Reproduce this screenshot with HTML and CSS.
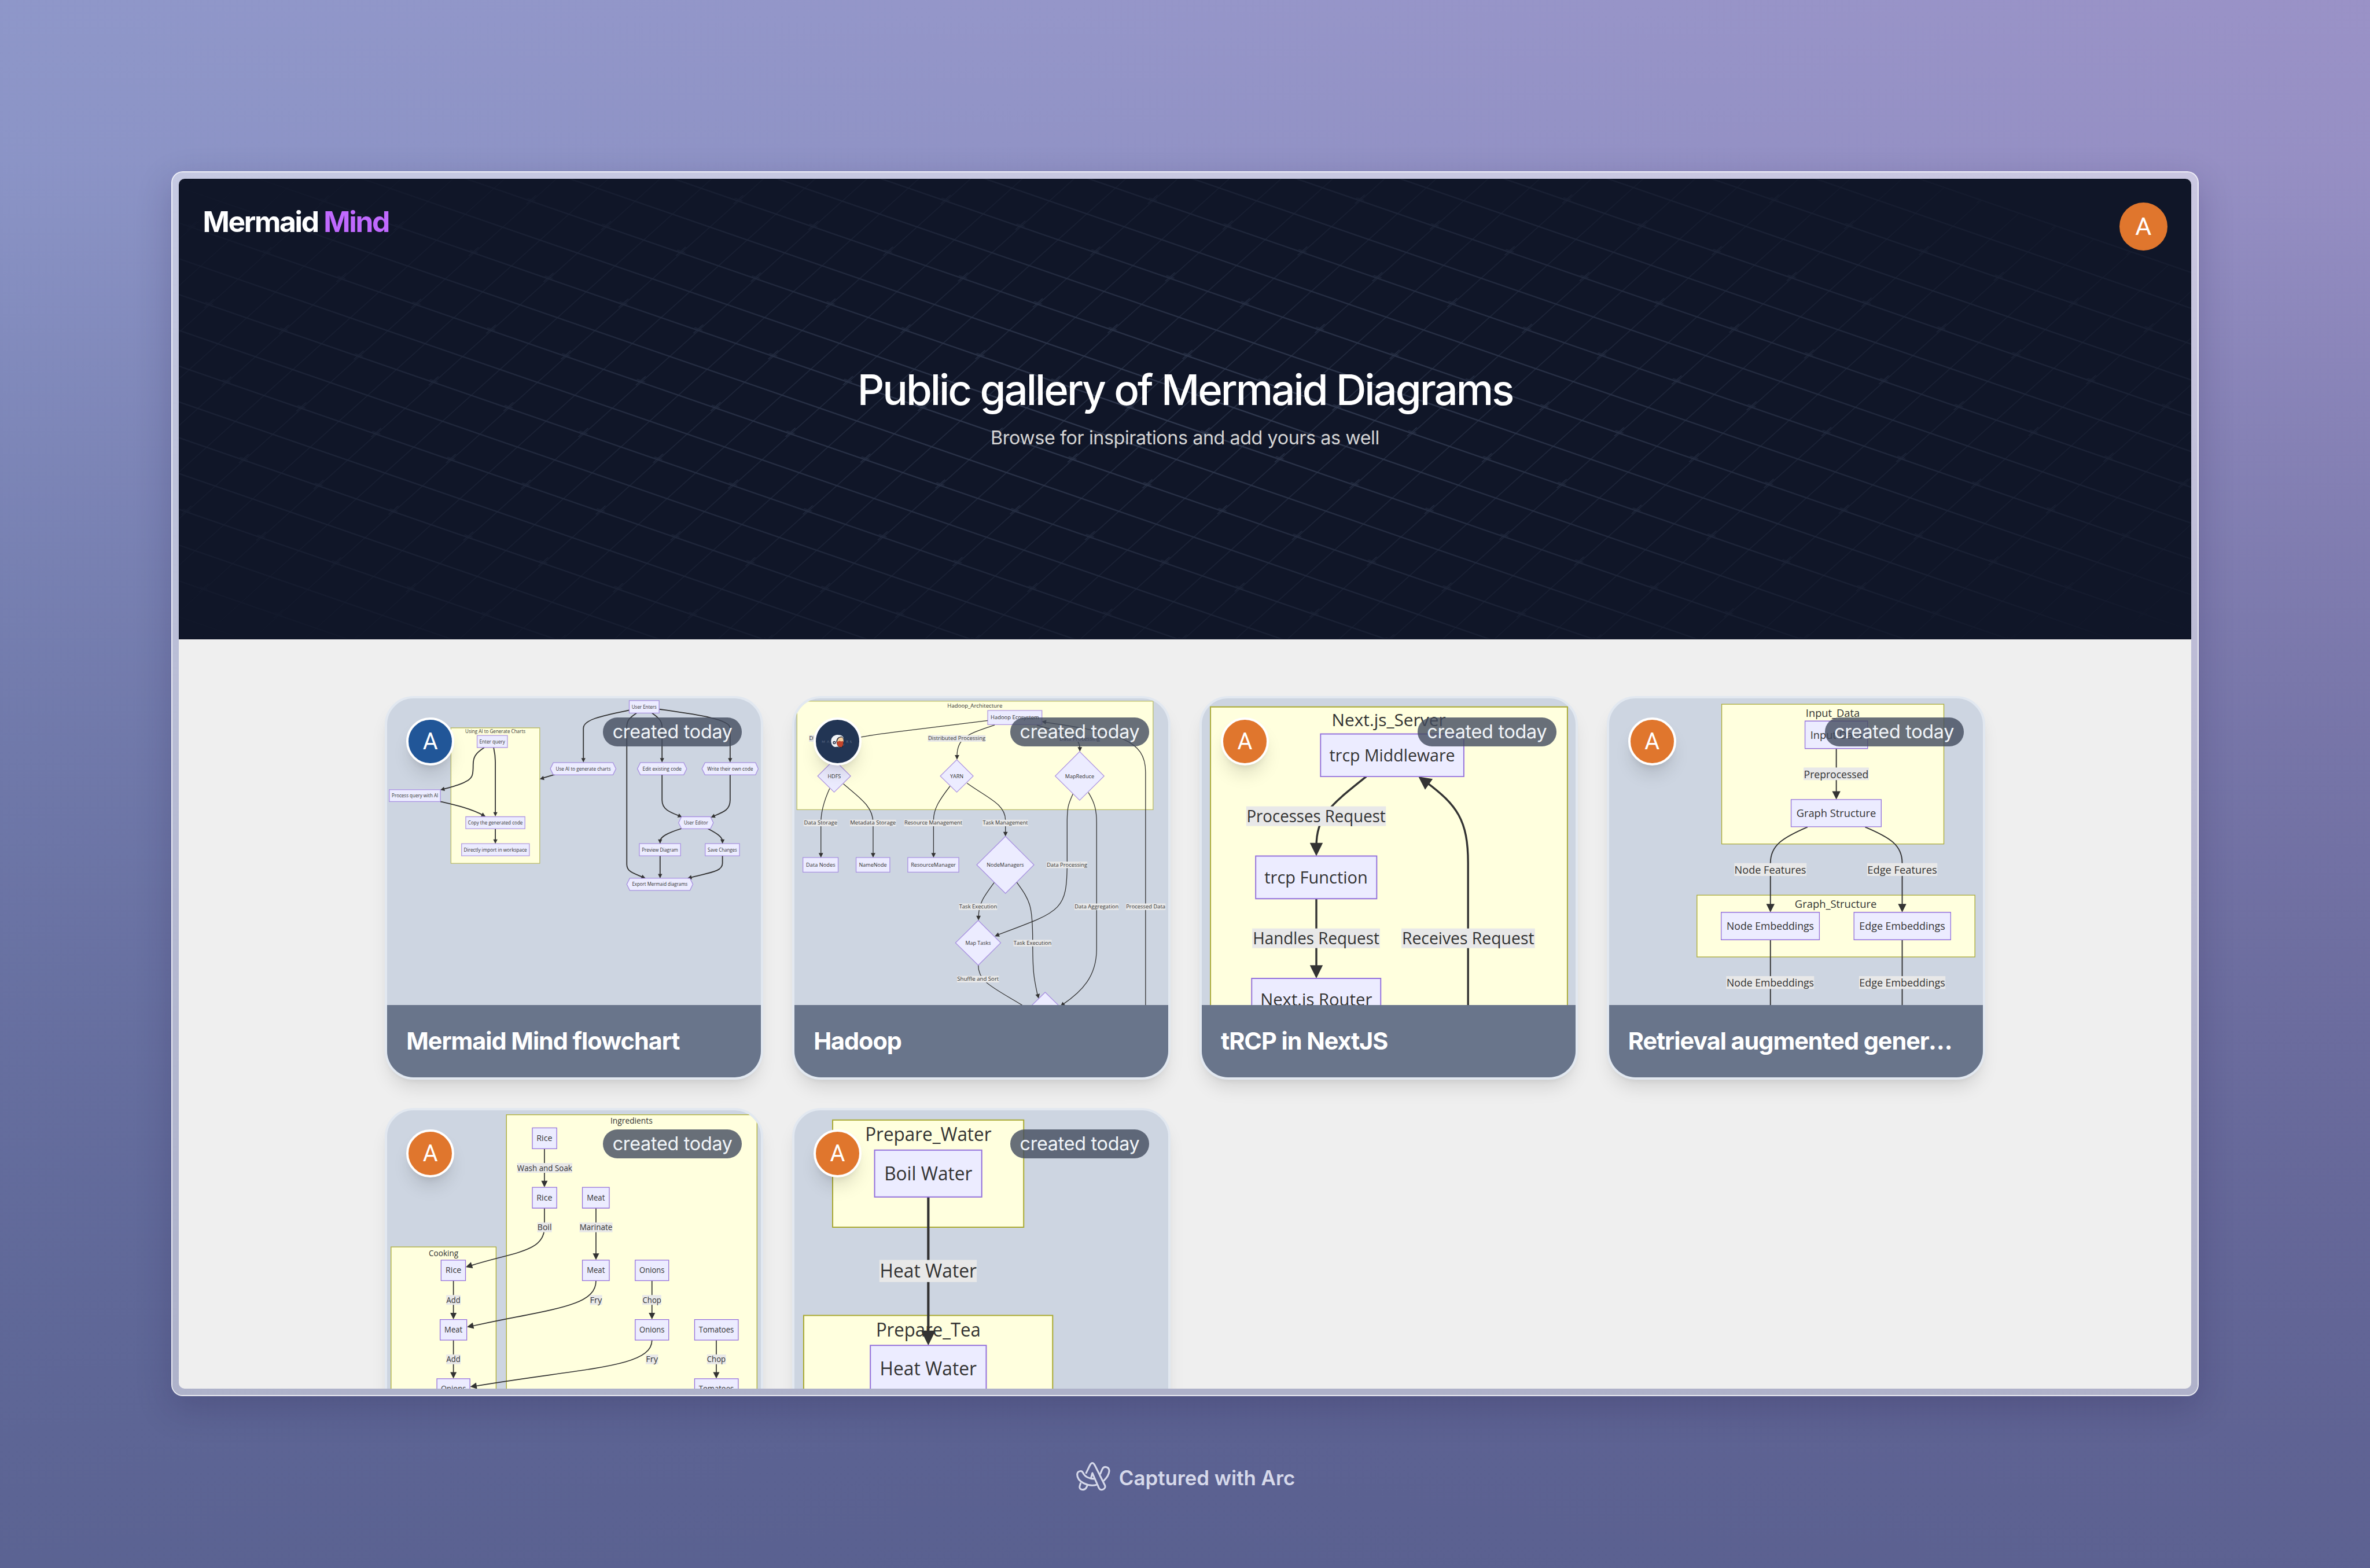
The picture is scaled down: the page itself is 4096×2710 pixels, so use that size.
FILE: index.html
```html
<!DOCTYPE html>
<html lang="en">
<head>
<meta charset="utf-8">
<title>Mermaid Mind – Public gallery</title>
<link rel="stylesheet" href="styles.css">
</head>
<body>
<svg class="defs" aria-hidden="true"><defs><path id="tip" d="M0 0L-5-10H5Z"/></defs></svg>

<div class="window">
<div class="page">
  <header class="hero">
    <svg class="hero-grid" viewBox="0 0 4320 987" preserveAspectRatio="none" aria-hidden="true">
      <defs>
        <pattern id="iso" width="160" height="160" patternUnits="userSpaceOnUse" patternTransform="matrix(1.0042 .3462 -.7713 .6944 1891.05 477.73)">
          <path d="M0 40H160M0 120H160" stroke-width="2.9"/>
          <path d="M40 0V160M120 0V160" stroke-width="2" stroke-opacity=".7"/>
          <path d="M108.500 116.400H125.500M116.900 103V130" stroke-width="2.400" stroke-opacity=".7"/>
        </pattern>
      </defs>
      <polygon points="0,0 3739,0 4320,200 4320,987 0,987" fill="url(#iso)"/>
    </svg>
    <nav class="topbar">
      <a class="brand">Mermaid <span>Mind</span></a>
      <span class="avatar avatar-user">A</span>
    </nav>
    <div class="intro">
      <h1>Public gallery of Mermaid Diagrams</h1>
      <p>Browse for inspirations and add yours as well</p>
    </div>
  </header>

  <main class="gallery">
    <article class="card">
      <div class="preview">
        <svg class="diagram d1" viewBox="22 37 1516 1216" preserveAspectRatio="none">
          <rect class="cluster" x="281" y="154" width="360" height="537"/>
          <g class="edge">
            <path d="M1004 84C900 105 818 120 818 155V282"/>
            <path d="M1034 95C1010 112 994 120 994 150V695C994 720 1010 727 1062 747"/>
            <path d="M1096 95C1120 112 1137 125 1137 150V282"/>
            <path d="M1126 80C1270 100 1413 118 1413 155V282"/>
            <path d="M702 339L650 354"/>
            <path d="M1137 340V440C1137 480 1175 490 1210 504"/>
            <path d="M1413 340V440C1413 480 1385 488 1343 505"/>
            <path d="M1216 553C1160 570 1129 585 1129 604"/>
            <path d="M1322 553C1355 570 1382 585 1382 604"/>
            <path d="M1129 661V742"/>
            <path d="M1382 661V690C1382 725 1330 727 1248 748"/>
            <path d="M416 232C380 255 371 270 371 300C371 340 368 350 350 362C320 380 290 386 246 398"/>
            <path d="M454 232Q461 262 461 290V496"/>
            <path d="M238 446C300 460 360 473 413 501"/>
            <path d="M461 554V604"/>
          </g>
          <g class="tips">
            <use href="#tip" transform="translate(818 291) scale(1.7)"/>
            <use href="#tip" transform="translate(1070 750) rotate(-68) scale(1.7)"/>
            <use href="#tip" transform="translate(1137 291) scale(1.7)"/>
            <use href="#tip" transform="translate(1413 291) scale(1.7)"/>
            <use href="#tip" transform="translate(641 357) rotate(75) scale(1.7)"/>
            <use href="#tip" transform="translate(1218 508) rotate(-66) scale(1.7)"/>
            <use href="#tip" transform="translate(1335 509) rotate(66) scale(1.7)"/>
            <use href="#tip" transform="translate(1129 613) scale(1.7)"/>
            <use href="#tip" transform="translate(1382 613) scale(1.7)"/>
            <use href="#tip" transform="translate(1129 750) scale(1.7)"/>
            <use href="#tip" transform="translate(1240 750) rotate(76) scale(1.7)"/>
            <use href="#tip" transform="translate(238 400) rotate(75) scale(1.7)"/>
            <use href="#tip" transform="translate(461 505) scale(1.7)"/>
            <use href="#tip" transform="translate(421 505) rotate(-62) scale(1.7)"/>
            <use href="#tip" transform="translate(461 613) scale(1.7)"/>
          </g>
          <g class="node">
            <rect x="1004" y="46" width="121" height="49"/>
            <rect x="387" y="184" width="123" height="48"/>
            <rect x="31" y="399" width="207" height="47"/>
            <rect x="341" y="506" width="240" height="48"/>
            <rect x="324" y="613" width="275" height="48"/>
            <rect x="1045" y="613" width="167" height="48"/>
            <rect x="1312" y="613" width="139" height="48"/>
            <polygon points="684,316 696,292 938,292 950,316 938,340 696,340"/>
            <polygon points="1037,316 1049,292 1225,292 1237,316 1225,340 1049,340"/>
            <polygon points="1299,316 1311,292 1516,292 1527,316 1516,340 1311,340"/>
            <polygon points="1204,530 1216,506 1333,506 1345,530 1333,554 1216,554"/>
            <polygon points="994,774 1006,750 1250,750 1262,774 1250,798 1006,798"/>
          </g>
          <g class="labels" transform="translate(0 7)">
            <text x="1064.500" y="71" textLength="101" lengthAdjust="spacingAndGlyphs">User Enters</text>
            <text x="461" y="168" textLength="244" lengthAdjust="spacingAndGlyphs">Using AI to Generate Charts</text>
            <text x="448.500" y="209" textLength="104" lengthAdjust="spacingAndGlyphs">Enter query</text>
            <text x="135" y="422" textLength="188" lengthAdjust="spacingAndGlyphs">Process query with AI</text>
            <text x="461" y="530" textLength="222" lengthAdjust="spacingAndGlyphs">Copy the generated code</text>
            <text x="461" y="638" textLength="256" lengthAdjust="spacingAndGlyphs">Directly import in workspace</text>
            <text x="817.500" y="316" textLength="223" lengthAdjust="spacingAndGlyphs">Use AI to generate charts</text>
            <text x="1137" y="316" textLength="158" lengthAdjust="spacingAndGlyphs">Edit existing code</text>
            <text x="1413" y="316" textLength="186" lengthAdjust="spacingAndGlyphs">Write their own code</text>
            <text x="1274.500" y="529" textLength="98" lengthAdjust="spacingAndGlyphs">User Editor</text>
            <text x="1128.500" y="638" textLength="147" lengthAdjust="spacingAndGlyphs">Preview Diagram</text>
            <text x="1381.500" y="638" textLength="119" lengthAdjust="spacingAndGlyphs">Save Changes</text>
            <text x="1128" y="774" textLength="225" lengthAdjust="spacingAndGlyphs">Export Mermaid diagrams</text>
          </g>
        </svg>
      </div>
      <span class="avatar avatar-card blue">A</span>
      <span class="badge">created today</span>
      <h2 class="caption">Mermaid Mind flowchart</h2>
    </article>

    <article class="card">
      <div class="preview">
        <svg class="diagram d2" viewBox="30 37 1497 1216" preserveAspectRatio="none">
          <rect class="cluster" x="40" y="48" width="1426" height="430"/>
          <g class="edge">
            <path d="M804 125L420 172C330 184 190 200 189 240"/>
            <path d="M832 142C740 175 681 185 681 265"/>
            <path d="M1000 142C1100 175 1173 180 1173 235"/>
            <path d="M1436 1253V330C1436 200 1330 175 1036 132"/>
            <path d="M171 394Q136 470 136 530V655"/>
            <path d="M226 376C290 430 345 465 345 530V655"/>
            <path d="M653 385C610 440 587 475 587 520V655"/>
            <path d="M721 373C800 430 875 455 875 520V570"/>
            <path d="M1145 416C1125 460 1123 470 1122 520V690C1121 880 1100 880 840 976"/>
            <path d="M1207 410C1232 450 1240 480 1240 530V1030C1240 1140 1180 1200 1105 1250"/>
            <path d="M830 767C790 820 767 850 767 905"/>
            <path d="M920 766C975 840 984 860 984 1000C984 1130 990 1150 1004 1215"/>
            <path d="M766 1095C766 1160 820 1180 945 1255"/>
          </g>
          <g class="tips">
            <use href="#tip" transform="translate(681 280) scale(1.8)"/>
            <use href="#tip" transform="translate(1173 248) scale(1.8)"/>
            <use href="#tip" transform="translate(1020 129) rotate(98) scale(1.8)"/>
            <use href="#tip" transform="translate(136 668) scale(1.8)"/>
            <use href="#tip" transform="translate(345 668) scale(1.8)"/>
            <use href="#tip" transform="translate(587 668) scale(1.8)"/>
            <use href="#tip" transform="translate(875 584) scale(1.8)"/>
            <use href="#tip" transform="translate(832 980) rotate(68) scale(1.8)"/>
            <use href="#tip" transform="translate(1095 1258) rotate(52) scale(1.8)"/>
            <use href="#tip" transform="translate(767 917) scale(1.8)"/>
            <use href="#tip" transform="translate(1008 1227) rotate(-14) scale(1.8)"/>
          </g>
          <g class="node">
            <rect x="804" y="85" width="217" height="56"/>
            <rect x="64" y="668" width="141" height="58"/>
            <rect x="277" y="668" width="135" height="58"/>
            <rect x="484" y="668" width="204" height="58"/>
            <polygon points="189,280 255,345 189,409 123,345"/>
            <polygon points="680,280 746,345 680,409 614,345"/>
            <polygon points="1172,248 1270,345 1172,441 1074,345"/>
            <polygon points="875,584 989,697 875,810 760,697"/>
            <polygon points="766,917 856,1006 766,1095 675,1006"/>
            <polygon points="1034,1202 1100,1266 1034,1330 968,1266"/>
          </g>
          <g class="plate">
            <rect x="88" y="183" width="203" height="26"/>
            <rect x="564" y="183" width="231" height="26"/>
            <rect x="1090" y="183" width="164" height="26"/>
            <rect x="67" y="518" width="135" height="26"/>
            <rect x="252" y="518" width="185" height="26"/>
            <rect x="469" y="518" width="234" height="26"/>
            <rect x="783" y="518" width="183" height="26"/>
            <rect x="1040" y="684" width="163" height="26"/>
            <rect x="689" y="850" width="153" height="26"/>
            <rect x="1151" y="850" width="178" height="26"/>
            <rect x="1357" y="850" width="159" height="26"/>
            <rect x="907" y="994" width="153" height="26"/>
            <rect x="681" y="1137" width="168" height="26"/>
          </g>
          <g class="labels" transform="translate(0 8)">
            <text x="752.500" y="65" textLength="220" lengthAdjust="spacingAndGlyphs">Hadoop_Architecture</text>
            <text x="912.500" y="112" textLength="194" lengthAdjust="spacingAndGlyphs">Hadoop Ecosystem</text>
            <text x="189.500" y="195" textLength="201" lengthAdjust="spacingAndGlyphs">Distributed Storage</text>
            <text x="680" y="195" textLength="230" lengthAdjust="spacingAndGlyphs">Distributed Processing</text>
            <text x="1172" y="196" textLength="162" lengthAdjust="spacingAndGlyphs">Data Processing</text>
            <text x="189.500" y="345" textLength="53" lengthAdjust="spacingAndGlyphs">HDFS</text>
            <text x="680" y="345" textLength="54" lengthAdjust="spacingAndGlyphs">YARN</text>
            <text x="1172" y="345" textLength="117" lengthAdjust="spacingAndGlyphs">MapReduce</text>
            <text x="135" y="530" textLength="133" lengthAdjust="spacingAndGlyphs">Data Storage</text>
            <text x="344.500" y="530" textLength="183" lengthAdjust="spacingAndGlyphs">Metadata Storage</text>
            <text x="586" y="530" textLength="232" lengthAdjust="spacingAndGlyphs">Resource Management</text>
            <text x="874.500" y="530" textLength="181" lengthAdjust="spacingAndGlyphs">Task Management</text>
            <text x="135" y="697" textLength="117" lengthAdjust="spacingAndGlyphs">Data Nodes</text>
            <text x="344" y="697" textLength="111" lengthAdjust="spacingAndGlyphs">NameNode</text>
            <text x="586" y="697" textLength="180" lengthAdjust="spacingAndGlyphs">ResourceManager</text>
            <text x="874.500" y="697" textLength="149" lengthAdjust="spacingAndGlyphs">NodeManagers</text>
            <text x="1121.500" y="697" textLength="162" lengthAdjust="spacingAndGlyphs">Data Processing</text>
            <text x="765.500" y="862" textLength="152" lengthAdjust="spacingAndGlyphs">Task Execution</text>
            <text x="1240" y="862" textLength="176" lengthAdjust="spacingAndGlyphs">Data Aggregation</text>
            <text x="1436.500" y="862" textLength="157" lengthAdjust="spacingAndGlyphs">Processed Data</text>
            <text x="765.500" y="1006" textLength="102" lengthAdjust="spacingAndGlyphs">Map Tasks</text>
            <text x="983.500" y="1006" textLength="152" lengthAdjust="spacingAndGlyphs">Task Execution</text>
            <text x="765" y="1149" textLength="167" lengthAdjust="spacingAndGlyphs">Shuffle and Sort</text>
          </g>
        </svg>
      </div>
      <span class="avatar avatar-card navy">
        <svg viewBox="0 0 276 276" aria-hidden="true">
          <g class="makers"><text x="48" y="149">M</text><text x="78" y="149">A</text><text x="200" y="149">R</text><text x="223" y="149">S</text></g>
          <path d="M97 137C97 108 120 96 140 96C160 96 172 104 175 112L178 160C170 176 150 178 138 172C115 178 99 165 97 137Z" fill="#f1f3f6"/>
          <path d="M131 137C131 118 150 104 166 107C180 116 184 150 170 176C150 182 134 170 131 137Z" fill="#1d2130"/>
          <path d="M136 140C138 120 152 110 166 112C178 122 178 138 174 144Z" fill="#f3cfa0"/>
          <path d="M133 142L152 134L160 138L174 136C176 152 174 166 164 174C148 176 134 166 133 142Z" fill="#c4452b"/>
          <circle cx="118" cy="146" r="7" fill="#f1f3f6" stroke="#343c50" stroke-width="6"/>
        </svg>
      </span>
      <span class="badge">created today</span>
      <h2 class="caption">Hadoop</h2>
    </article>

    <article class="card">
      <div class="preview">
        <svg class="diagram d3" viewBox="37 37 1498 1216" preserveAspectRatio="none">
          <rect class="cluster" x="72" y="71" width="1430" height="1400"/>
          <g class="edge">
            <path d="M696 347C560 455 496 500 496 625"/>
            <path d="M496 832V1110"/>
            <path d="M1104 1260V690C1104 520 1060 460 935 368"/>
          </g>
          <g class="tips">
            <use href="#tip" transform="translate(496 662) scale(5.200)"/>
            <use href="#tip" transform="translate(496 1147) scale(5.200)"/>
            <use href="#tip" transform="translate(905 347) rotate(126) scale(5.200)"/>
          </g>
          <g class="node">
            <rect x="513" y="178" width="574" height="169"/>
            <rect x="253" y="662" width="485" height="169"/>
            <rect x="237" y="1147" width="517" height="169"/>
          </g>
          <g class="plate">
            <rect x="215" y="465" width="560" height="78"/>
            <rect x="239" y="949" width="512" height="78"/>
            <rect x="837" y="949" width="535" height="78"/>
          </g>
          <g class="labels" transform="translate(0 24)">
            <text x="786" y="124" textLength="457" lengthAdjust="spacingAndGlyphs">Next.js_Server</text>
            <text x="800" y="263" textLength="503" lengthAdjust="spacingAndGlyphs">trcp Middleware</text>
            <text x="495" y="504" textLength="557" lengthAdjust="spacingAndGlyphs">Processes Request</text>
            <text x="495" y="746" textLength="414" lengthAdjust="spacingAndGlyphs">trcp Function</text>
            <text x="495" y="988" textLength="507" lengthAdjust="spacingAndGlyphs">Handles Request</text>
            <text x="1104" y="988" textLength="530" lengthAdjust="spacingAndGlyphs">Receives Request</text>
            <text x="495.500" y="1230" textLength="448" lengthAdjust="spacingAndGlyphs">Next.js Router</text>
          </g>
        </svg>
      </div>
      <span class="avatar avatar-card">A</span>
      <span class="badge">created today</span>
      <h2 class="caption">tRCP in NextJS</h2>
    </article>

    <article class="card">
      <div class="preview">
        <svg class="diagram d4" viewBox="44 37 1481 1216" preserveAspectRatio="none">
          <rect class="cluster" x="490" y="60" width="880" height="554"/>
          <rect class="cluster" x="392" y="817" width="1101" height="245"/>
          <g class="edge">
            <path d="M944 235V415"/>
            <path d="M830 547C730 590 683 620 683 690V860"/>
            <path d="M1058 547C1160 590 1205 620 1205 690V860"/>
            <path d="M683 994V1260"/>
            <path d="M1205 994V1260"/>
          </g>
          <g class="tips">
            <use href="#tip" transform="translate(944 438) scale(3.300)"/>
            <use href="#tip" transform="translate(683 885) scale(3.300)"/>
            <use href="#tip" transform="translate(1205 885) scale(3.300)"/>
          </g>
          <g class="node">
            <rect x="820" y="127" width="248" height="109"/>
            <rect x="765" y="438" width="357" height="108"/>
            <rect x="488" y="885" width="389" height="109"/>
            <rect x="1014" y="885" width="383" height="109"/>
          </g>
          <g class="plate">
            <rect x="814" y="311" width="259" height="50"/>
            <rect x="540" y="690" width="286" height="51"/>
            <rect x="1066" y="690" width="278" height="51"/>
            <rect x="508" y="1138" width="348" height="51"/>
            <rect x="1034" y="1138" width="342" height="51"/>
          </g>
          <g class="labels" transform="translate(0 15.500)">
            <text x="930" y="94" textLength="214" lengthAdjust="spacingAndGlyphs">Input_Data</text>
            <text x="944" y="181" textLength="206" lengthAdjust="spacingAndGlyphs">Input Data</text>
            <text x="943.500" y="338" textLength="256" lengthAdjust="spacingAndGlyphs">Preprocessed</text>
            <text x="943.500" y="492" textLength="315" lengthAdjust="spacingAndGlyphs">Graph Structure</text>
            <text x="682.500" y="716" textLength="284" lengthAdjust="spacingAndGlyphs">Node Features</text>
            <text x="1205" y="716" textLength="276" lengthAdjust="spacingAndGlyphs">Edge Features</text>
            <text x="941.500" y="851" textLength="324" lengthAdjust="spacingAndGlyphs">Graph_Structure</text>
            <text x="682.500" y="940" textLength="346" lengthAdjust="spacingAndGlyphs">Node Embeddings</text>
            <text x="1205" y="940" textLength="340" lengthAdjust="spacingAndGlyphs">Edge Embeddings</text>
            <text x="682.500" y="1164" textLength="346" lengthAdjust="spacingAndGlyphs">Node Embeddings</text>
            <text x="1205" y="1164" textLength="340" lengthAdjust="spacingAndGlyphs">Edge Embeddings</text>
          </g>
        </svg>
      </div>
      <span class="avatar avatar-card">A</span>
      <span class="badge">created today</span>
      <h2 class="caption">Retrieval augmented generation</h2>
    </article>

    <article class="card">
      <div class="preview">
        <svg class="diagram d5" viewBox="22 58.500 1516 1564" preserveAspectRatio="none">
          <rect class="cluster" x="506" y="81" width="1016" height="1700"/>
          <rect class="cluster" x="38" y="755" width="426" height="1000"/>
          <g class="edge">
            <path d="M660 254V430"/>
            <path d="M660 557V655C660 780 540 780 362 850"/>
            <path d="M869 557V800"/>
            <path d="M291 927V1100"/>
            <path d="M869 927C869 1060 690 1070 368 1158"/>
            <path d="M1096 927V1100"/>
            <path d="M291 1230V1402"/>
            <path d="M1096 1230C1096 1370 830 1370 382 1464"/>
            <path d="M1357 1230V1402"/>
          </g>
          <g class="tips">
            <use href="#tip" transform="translate(660 451) scale(2.600 3.300)"/>
            <use href="#tip" transform="translate(869 821) scale(2.600 3.300)"/>
            <use href="#tip" transform="translate(341 858) scale(.8 1) rotate(72) scale(3.300)"/>
            <use href="#tip" transform="translate(291 1124) scale(2.600 3.300)"/>
            <use href="#tip" transform="translate(346 1163) scale(.8 1) rotate(78) scale(3.300)"/>
            <use href="#tip" transform="translate(1096 1124) scale(2.600 3.300)"/>
            <use href="#tip" transform="translate(291 1426) scale(2.600 3.300)"/>
            <use href="#tip" transform="translate(359 1468) scale(.8 1) rotate(81) scale(3.300)"/>
            <use href="#tip" transform="translate(1357 1426) scale(2.600 3.300)"/>
          </g>
          <g class="node">
            <rect x="611" y="148" width="99" height="106"/>
            <rect x="611" y="451" width="99" height="106"/>
            <rect x="814" y="451" width="109" height="106"/>
            <rect x="241" y="822" width="99" height="105"/>
            <rect x="814" y="822" width="109" height="105"/>
            <rect x="1028" y="822" width="136" height="105"/>
            <rect x="237" y="1125" width="108" height="105"/>
            <rect x="1028" y="1125" width="136" height="105"/>
            <rect x="1269" y="1125" width="177" height="105"/>
            <rect x="224" y="1427" width="134" height="106"/>
            <rect x="1269" y="1427" width="177" height="106"/>
          </g>
          <g class="plate">
            <rect x="549" y="327" width="224" height="50"/>
            <rect x="631" y="630" width="59" height="50"/>
            <rect x="802" y="630" width="134" height="50"/>
            <rect x="262" y="1000" width="58" height="50"/>
            <rect x="844" y="1000" width="50" height="50"/>
            <rect x="1057" y="1000" width="77" height="50"/>
            <rect x="262" y="1303" width="58" height="50"/>
            <rect x="1071" y="1303" width="50" height="50"/>
            <rect x="1319" y="1303" width="77" height="50"/>
          </g>
          <g class="labels" transform="translate(0 14)">
            <text x="1013" y="113" textLength="171" lengthAdjust="spacingAndGlyphs">Ingredients</text>
            <text x="251" y="788" textLength="120" lengthAdjust="spacingAndGlyphs">Cooking</text>
            <text x="660" y="202" textLength="64" lengthAdjust="spacingAndGlyphs">Rice</text>
            <text x="661" y="353" textLength="223" lengthAdjust="spacingAndGlyphs">Wash and Soak</text>
            <text x="660" y="504" textLength="64" lengthAdjust="spacingAndGlyphs">Rice</text>
            <text x="868.500" y="504" textLength="73" lengthAdjust="spacingAndGlyphs">Meat</text>
            <text x="660.500" y="656" textLength="58" lengthAdjust="spacingAndGlyphs">Boil</text>
            <text x="869" y="656" textLength="133" lengthAdjust="spacingAndGlyphs">Marinate</text>
            <text x="291" y="874" textLength="64" lengthAdjust="spacingAndGlyphs">Rice</text>
            <text x="868.500" y="874" textLength="73" lengthAdjust="spacingAndGlyphs">Meat</text>
            <text x="1096" y="874" textLength="102" lengthAdjust="spacingAndGlyphs">Onions</text>
            <text x="291" y="1026" textLength="57" lengthAdjust="spacingAndGlyphs">Add</text>
            <text x="869" y="1026" textLength="49" lengthAdjust="spacingAndGlyphs">Fry</text>
            <text x="1096" y="1026" textLength="76" lengthAdjust="spacingAndGlyphs">Chop</text>
            <text x="291" y="1176" textLength="73" lengthAdjust="spacingAndGlyphs">Meat</text>
            <text x="1096" y="1176" textLength="102" lengthAdjust="spacingAndGlyphs">Onions</text>
            <text x="1357" y="1176" textLength="142" lengthAdjust="spacingAndGlyphs">Tomatoes</text>
            <text x="291" y="1328" textLength="57" lengthAdjust="spacingAndGlyphs">Add</text>
            <text x="1096" y="1328" textLength="49" lengthAdjust="spacingAndGlyphs">Fry</text>
            <text x="1357" y="1328" textLength="76" lengthAdjust="spacingAndGlyphs">Chop</text>
            <text x="291" y="1478" textLength="102" lengthAdjust="spacingAndGlyphs">Onions</text>
            <text x="1357" y="1478" textLength="142" lengthAdjust="spacingAndGlyphs">Tomatoes</text>
          </g>
        </svg>
      </div>
      <span class="avatar avatar-card">A</span>
      <span class="badge">created today</span>
      <h2 class="caption"></h2>
    </article>

    <article class="card">
      <div class="preview">
        <svg class="diagram d6" viewBox="30 58.500 1497 1564" preserveAspectRatio="none">
          <rect class="cluster" x="183" y="108" width="765" height="546"/>
          <rect class="cluster" x="67" y="1104" width="997" height="800"/>
          <g class="labels" transform="translate(0 34)">
            <text x="566" y="181" textLength="506" lengthAdjust="spacingAndGlyphs">Prepare_Water</text>
            <text x="566" y="1178" textLength="419" lengthAdjust="spacingAndGlyphs">Prepare_Tea</text>
          </g>
          <g class="edge"><path d="M566 500V1200"/></g>
          <g class="tips"><use href="#tip" transform="translate(566 1257) scale(5.800 7.500)"/></g>
          <g class="node">
            <rect x="351" y="261" width="429" height="239"/>
            <rect x="334" y="1257" width="464" height="240"/>
          </g>
          <g class="plate"><rect x="370" y="821" width="390" height="113"/></g>
          <g class="labels" transform="translate(0 34)">
            <text x="566" y="380" textLength="353" lengthAdjust="spacingAndGlyphs">Boil Water</text>
            <text x="566" y="878" textLength="388" lengthAdjust="spacingAndGlyphs">Heat Water</text>
            <text x="566" y="1377" textLength="388" lengthAdjust="spacingAndGlyphs">Heat Water</text>
          </g>
        </svg>
      </div>
      <span class="avatar avatar-card">A</span>
      <span class="badge">created today</span>
      <h2 class="caption"></h2>
    </article>
  </main>
</div>
</div>

<footer class="credit">
  <svg viewBox="80 92 232 198" aria-hidden="true">
    <path d="M148 174L174 120Q190 90 206 120L271 250C281 272 243 290 232 266L190 170L181 203"/>
    <path d="M218 246C160 260 92 226 92 180C92 158 120 150 129 167C140 192 170 210 207 207"/>
    <path d="M115 232L108 256C102 280 140 285 151 264L159 247"/>
    <path d="M240 178L255 143C267 122 299 130 299 157C297 180 280 205 262 221"/>
  </svg>
  <span>Captured with Arc</span>
</footer>
</body>
</html>
```
FILE: styles.css
```css
html {
  font-size: 33.121px;
}

* {
  box-sizing: border-box;
}

body {
  margin: 0;
  height: 2710px;
  padding-top: 296px;
  display: flex;
  flex-direction: column;
  align-items: center;
  overflow: hidden;
  font-family: Inter, "Liberation Sans", sans-serif;
  background:
    linear-gradient(180deg, rgba(88, 95, 142, 0) 10%, rgba(88, 95, 142, .8) 100%),
    linear-gradient(90deg, rgba(124, 152, 200, .28), rgba(124, 152, 200, 0) 45%, rgba(170, 130, 190, .22)),
    linear-gradient(180deg, #9596c9 0%, #8f91c4 14%, #62679a 93%, #5e6496 100%);
}

.defs {
  position: absolute;
  width: 0;
  height: 0;
}

/* Window */
.window {
  flex: none;
  padding: 11px;
  border: 2px solid rgba(255, 255, 255, .86);
  border-radius: 20px;
  background: rgba(255, 255, 255, .5);
  background-clip: padding-box;
  box-shadow: 0 20px 60px rgba(30, 25, 70, .22);
}

.page {
  width: 3478px;
  height: 2091px;
  overflow: hidden;
  border-radius: 10px;
  background: #efefef;
}

/* Hero */
.hero {
  position: relative;
  display: grid;
  height: 24.04rem;
  background: #101628;
  color: #fff;
}

.hero > * {
  grid-area: 1 / 1;
}

.hero-grid {
  width: 100%;
  height: 24rem;
  stroke: #343d54;
  mask-image: radial-gradient(#000, transparent);
}

.topbar {
  z-index: 1;
  display: flex;
  justify-content: space-between;
  align-items: flex-start;
  padding: 1.25rem;
}

.brand {
  font-size: 1.5rem;
  line-height: 2.05rem;
  font-weight: 700;
  letter-spacing: -.046em;
}

.brand span {
  color: #c069fe;
}

.intro {
  z-index: 1;
  align-self: center;
  text-align: center;
}

h1 {
  margin: 0;
  font-size: 2.19rem;
  line-height: 2.5rem;
  font-weight: 450;
  letter-spacing: -.041em;
}

.intro p {
  margin: .5rem 0 0;
  font-size: .975rem;
  line-height: 1.5rem;
  letter-spacing: -.013em;
  color: #d4d4d4;
}

.avatar {
  display: flex;
  align-items: center;
  justify-content: center;
  width: 2.5rem;
  height: 2.5rem;
  border-radius: 50%;
  background: #e0762d;
  color: #fff;
  font-family: Roboto, sans-serif;
  font-size: 1.3rem;
}

/* Gallery */
.gallery {
  display: grid;
  grid-template-columns: repeat(4, 19.75rem);
  gap: 1.5rem;
  justify-content: center;
  padding: 2.96rem 0;
}

.card {
  position: relative;
  display: flex;
  flex-direction: column;
  height: 20rem;
  overflow: hidden;
  border: .125rem solid #e2e8f0;
  border-radius: 1.5rem;
  background: #cdd5e1;
  box-shadow: 0 .625rem .94rem -.19rem rgba(0, 0, 0, .1), 0 .25rem .375rem -.25rem rgba(0, 0, 0, .1);
}

.preview {
  flex: 1;
  min-height: 0;
}

.caption {
  flex: none;
  height: 3.75rem;
  margin: 0;
  padding: 0 1rem;
  overflow: hidden;
  text-overflow: ellipsis;
  white-space: nowrap;
  background: #69758b;
  color: #fff;
  font-size: 1.25rem;
  line-height: 3.75rem;
  font-weight: 700;
  letter-spacing: -.025em;
}

.avatar-card {
  position: absolute;
  left: 1rem;
  top: 1rem;
  border: .125rem solid #fff;
  font-size: 1.2rem;
  box-shadow: 0 .625rem .94rem -.19rem rgba(0, 0, 0, .13), 0 .25rem .375rem -.25rem rgba(0, 0, 0, .12);
}

.avatar-card.blue {
  background: #215698;
}

.avatar-card.navy {
  background: #223554;
}

.avatar-card svg {
  width: 100%;
  height: 100%;
}

.makers {
  font: 300 22px Lato, sans-serif;
  fill: #9aa6b8;
  text-anchor: middle;
}

.badge {
  position: absolute;
  right: 1rem;
  top: 1rem;
  padding: 0 .5rem;
  border-radius: .75rem;
  background: rgba(66, 75, 94, .8);
  color: #f1f5f9;
  font-size: .975rem;
  line-height: 1.5rem;
  letter-spacing: -.008em;
}

/* Diagrams */
.diagram {
  display: block;
  width: 100%;
  height: 100%;
  --line: 2px;
  --box: 1.3px;
}

.d1 { --line: 1.8px; font-size: 19.5px; }
.d2 { --line: 1.3px; font-size: 22.5px; }
.d3 { --line: 3.4px; --box: 1.9px; font-size: 67px; }
.d4 { --line: 1.9px; font-size: 43.5px; }
.d5 { --line: 1.7px; font-size: 42.5px; }
.d6 { --line: 4.2px; --box: 2px; font-size: 96px; }

.cluster {
  fill: #ffffde;
  stroke: #aaaa33;
  stroke-width: var(--box);
  vector-effect: non-scaling-stroke;
}

.node > * {
  fill: #ececff;
  stroke: #9370db;
  stroke-width: var(--box);
  vector-effect: non-scaling-stroke;
}

.edge path {
  fill: none;
  stroke: #333;
  stroke-width: var(--line);
  vector-effect: non-scaling-stroke;
}

.tips {
  fill: #333;
}

.plate {
  fill: #e8e8e8;
}

.labels {
  fill: #333;
  font-family: "Trebuchet MS", "Open Sans", sans-serif;
  text-anchor: middle;
}

.d1 .cluster,
.d2 .cluster,
.d1 .node > *,
.d2 .node > * {
  stroke-opacity: .7;
}

/* Footer credit */
.credit {
  display: flex;
  align-items: center;
  gap: 13px;
  margin-top: 112px;
  color: #d6d9ea;
  font-size: 34.8px;
  font-weight: 600;
  line-height: 40px;
}

.credit svg {
  width: 63px;
  height: 53px;
  fill: none;
  stroke: currentColor;
  stroke-width: 11.5;
  stroke-linejoin: round;
}

.credit span {
  padding-top: 5px;
}
```
